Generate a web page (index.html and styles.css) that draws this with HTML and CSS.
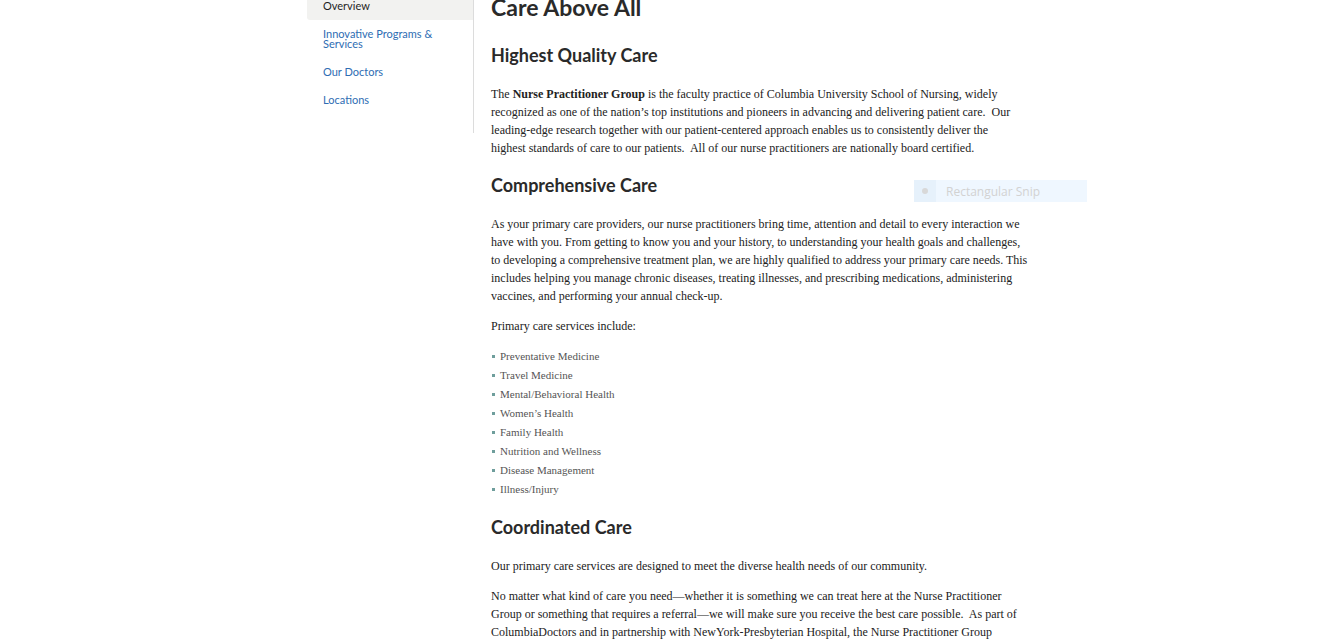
FILE: index.html
```html
<!DOCTYPE html>
<html lang="en">
<head>
<meta charset="utf-8">
<title>Care Above All</title>
<link rel="stylesheet" href="styles.css">
</head>
<body>
<div class="page">
  <aside class="sidebar">
    <nav class="side-nav">
      <a class="nav-item active" href="#">Overview</a>
      <a class="nav-item" href="#">Innovative Programs &amp;<br>Services</a>
      <a class="nav-item" href="#">Our Doctors</a>
      <a class="nav-item" href="#">Locations</a>
    </nav>
  </aside>
  <main class="content">
    <h1 class="title">Care Above All</h1>

    <h2 class="section-title">Highest Quality Care</h2>
    <p class="para">The <strong>Nurse Practitioner Group</strong> is the faculty practice of Columbia University School of Nursing, widely<br>recognized as one of the nation’s top institutions and pioneers in advancing and delivering patient care.&nbsp; Our<br>leading-edge research together with our patient-centered approach enables us to consistently deliver the<br>highest standards of care to our patients.&nbsp; All of our nurse practitioners are nationally board certified.</p>

    <h2 class="section-title">Comprehensive Care</h2>
    <p class="para">As your primary care providers, our nurse practitioners bring time, attention and detail to every interaction we<br>have with you. From getting to know you and your history, to understanding your health goals and challenges,<br>to developing a comprehensive treatment plan, we are highly qualified to address your primary care needs. This<br>includes helping you manage chronic diseases, treating illnesses, and prescribing medications, administering<br>vaccines, and performing your annual check-up.</p>
    <p class="para">Primary care services include:</p>
    <ul class="services">
      <li>Preventative Medicine</li>
      <li>Travel Medicine</li>
      <li>Mental/Behavioral Health</li>
      <li>Women’s Health</li>
      <li>Family Health</li>
      <li>Nutrition and Wellness</li>
      <li>Disease Management</li>
      <li>Illness/Injury</li>
    </ul>

    <h2 class="section-title">Coordinated Care</h2>
    <p class="para">Our primary care services are designed to meet the diverse health needs of our community.</p>
    <p class="para">No matter what kind of care you need—whether it is something we can treat here at the Nurse Practitioner<br>Group or something that requires a referral—we will make sure you receive the best care possible.&nbsp; As part of<br>ColumbiaDoctors and in partnership with NewYork-Presbyterian Hospital, the Nurse Practitioner Group</p>
  </main>
</div>
<div class="snip">
  <span class="snip-icon"><span class="snip-dot"></span></span>
  <span class="snip-label">Rectangular Snip</span>
</div>
</body>
</html>
```

FILE: styles.css
```css
html, body {
  margin: 0;
  padding: 0;
  background: #ffffff;
  overflow: hidden;
}

.page {
  display: flex;
  align-items: flex-start;
  padding-left: 307px;
}

.sidebar {
  width: 166px;
  border-right: 1px solid #dcdcdc;
  padding-bottom: 19px;
  flex-shrink: 0;
}

.side-nav {
  display: flex;
  flex-direction: column;
}

.nav-item {
  display: block;
  font-family: Lato, "Noto Sans", sans-serif;
  font-size: 11px;
  line-height: 10px;
  color: #2e6db3;
  text-decoration: none;
  padding: 9px 10px 9px 16px;
}

.nav-item.active {
  background: #f2f2f0;
  color: #1f1f1f;
  padding-top: 1px;
  padding-bottom: 9px;
  border-bottom-left-radius: 3px;
}

.content {
  padding-left: 17px;
  width: 560px;
  color: #222222;
}

.title {
  font-family: Lato, "Noto Sans", sans-serif;
  font-weight: 700;
  font-size: 23px;
  line-height: 28px;
  margin: -7px 0 23px;
  color: #2a2a2a;
}

.section-title {
  font-family: Lato, "Noto Sans", sans-serif;
  font-weight: 700;
  font-size: 18px;
  line-height: 22px;
  margin: 17px 0 19px;
  color: #2a2a2a;
}

.title + .section-title {
  margin-top: 0;
}

.para {
  font-family: "Liberation Serif", "Times New Roman", serif;
  font-size: 12px;
  line-height: 18px;
  margin: 0 0 12px;
  color: #222222;
  white-space: nowrap;
}

.para strong {
  font-weight: 700;
}

.services {
  list-style: none;
  margin: 10px 0 15px;
  padding: 0;
}

.services li {
  position: relative;
  font-family: "Liberation Serif", "Times New Roman", serif;
  font-size: 11px;
  line-height: 19px;
  color: #555555;
  padding-left: 9px;
}

.services li::before {
  content: "";
  position: absolute;
  left: 1px;
  top: 8px;
  width: 3px;
  height: 3px;
  background: #6f9e9c;
}

.snip {
  position: absolute;
  left: 914px;
  top: 180px;
  width: 173px;
  height: 22px;
  display: flex;
  align-items: center;
  background: #eff7ff;
}

.snip-icon {
  width: 22px;
  height: 22px;
  background: #e6f1fb;
  display: flex;
  align-items: center;
  justify-content: center;
}

.snip-dot {
  width: 6px;
  height: 6px;
  border-radius: 50%;
  background: #d8d8d8;
}

.snip-label {
  margin-left: 10px;
  font-family: "Open Sans", "Noto Sans", sans-serif;
  font-size: 12px;
  color: #d2d2d2;
}
```
